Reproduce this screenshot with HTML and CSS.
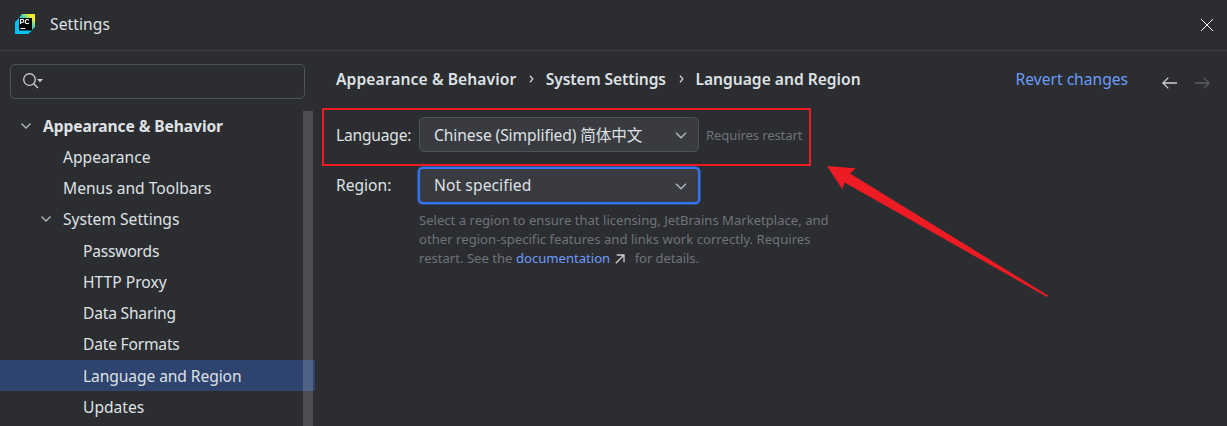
FILE: index.html
```html
<!DOCTYPE html>
<html lang="en">
<head>
<meta charset="utf-8">
<title>Settings</title>
<link rel="stylesheet" href="styles.css">
</head>
<body>
<div class="window">
  <header class="titlebar">
    <svg class="logo" width="20" height="20" viewBox="0 0 20 20">
      <defs>
        <linearGradient id="g" x1="6" y1="14" x2="18" y2="2" gradientUnits="userSpaceOnUse">
          <stop offset="0.3" stop-color="#12c8e8"/><stop offset="0.62" stop-color="#5fd9a0"/><stop offset="0.9" stop-color="#f4ee2a"/>
        </linearGradient>
      </defs>
      <path fill="url(#g)" d="M7 0H20V13L13 20H4V4z"/>
      <path fill="#07c3f2" d="M4 4L0 8V20H13L17 16H4z"/>
      <path fill="#000" d="M4 4H17V16.500H4z"/>
      <g class="mark">
        <path d="M5.6 10V5.5H7.4Q8.8 5.5 8.8 6.900T7.4 8.300H5.6M14 6.400Q13.3 5.500 12.2 5.500Q10.3 5.500 10.3 7.600T12.2 9.700Q13.3 9.700 14 8.900M5.500 14.500H10.200"/>
      </g>
    </svg>
    <span class="title">Settings</span>
    <svg class="close" width="12" height="12" viewBox="0 0 12 12"><path d="M0 0L12 12M12 0L0 12"/></svg>
  </header>
  <div class="body">
    <aside class="sidebar">
      <div class="search">
        <svg width="22" height="17" viewBox="0 0 22 17"><circle cx="6.500" cy="6.500" r="5.800"/><path d="M10.700 10.700L15 15"/><path class="solid" d="M14 6H20L17 9.200z"/></svg>
      </div>
      <div class="tree">
        <div class="row top"><svg class="chev" width="10" height="6" viewBox="0 0 10 6"><path d="M.5 .5L5 5L9.5 .5"/></svg><span class="tight1">Appearance &amp; Behavior</span></div>
        <div class="row l2"><span>Appearance</span></div>
        <div class="row l2"><span>Menus and Toolbars</span></div>
        <div class="row sub"><svg class="chev" width="10" height="6" viewBox="0 0 10 6"><path d="M.5 .5L5 5L9.5 .5"/></svg><span>System Settings</span></div>
        <div class="row l3"><span class="tight2">Passwords</span></div>
        <div class="row l3"><span>HTTP Proxy</span></div>
        <div class="row l3"><span class="tight2">Data Sharing</span></div>
        <div class="row l3"><span class="tight2">Date Formats</span></div>
        <div class="row l3 selected"><span class="tight1">Language and Region</span></div>
        <div class="row l3"><span>Updates</span></div>
        <div class="scrollbar"></div>
      </div>
    </aside>
    <main class="content">
      <div class="crumbs">
        <span class="loose">Appearance &amp; Behavior</span>
        <svg class="sep" width="5" height="8" viewBox="0 0 5 8"><path d="M1 .8L3.8 4L1 7.2"/></svg>
        <span class="tight1">System Settings</span>
        <svg class="sep" width="5" height="8" viewBox="0 0 5 8"><path d="M1 .8L3.8 4L1 7.2"/></svg>
        <span>Language and Region</span>
        <span class="revert">Revert changes</span>
        <svg class="arrow" width="15" height="12" viewBox="0 0 15 12"><path d="M15 6H1M6.3 .6L.9 6L6.3 11.4"/></svg>
        <svg class="arrow off" width="15" height="12" viewBox="0 0 15 12"><path d="M0 6H14M8.7 .6L14.1 6L8.7 11.4"/></svg>
      </div>
      <div class="field">
        <span class="label tight2">Language:</span>
        <div class="select"><span class="tight1">Chinese (Simplified) 简体中文</span><svg class="chev" width="12" height="7" viewBox="0 0 12 7"><path d="M1 .8L6 5.8L11 .8"/></svg></div>
        <span class="hint">Requires restart</span>
      </div>
      <div class="field second">
        <span class="label">Region:</span>
        <div class="select focus"><span class="loose">Not specified</span><svg class="chev" width="12" height="7" viewBox="0 0 12 7"><path d="M1 .8L6 5.8L11 .8"/></svg></div>
      </div>
      <div class="help">
        <div>Select a region to ensure that licensing, JetBrains Marketplace, and</div>
        <div class="loose-help">other region-specific features and links work correctly. Requires</div>
        <div class="last"><span>restart. See the <a>documentation</a></span><svg width="10" height="10" viewBox="0 0 10 10"><path d="M.8 9.2L9 1M1.8 1H9V8.2"/></svg><span class="tight1">for details.</span></div>
      </div>
    </main>
  </div>
  <div class="highlight"></div>
  <svg class="pointer" width="225" height="135" viewBox="825 164 225 135"><path d="M827 166L855.5 168.300L850 173.500L1048 295.500L1047 297L844.500 182.500L842.500 189.500z"/></svg>
</div>
</body>
</html>
```
FILE: styles.css
```css
* { box-sizing: border-box; }
body { margin: 0; background: #2b2d30; }
.window {
  position: relative; width: 1227px; height: 426px; overflow: hidden;
  display: flex; flex-direction: column;
  color: #dfe1e5; font: 15.6px/20px "Noto Sans", "Noto Sans CJK SC", sans-serif; white-space: nowrap;
}
.window svg { flex: none; fill: none; stroke: #ced0d6; stroke-width: 1.3; }
.loose { letter-spacing: .1px; }
.loose-help { letter-spacing: .02px; }
.tight1 { letter-spacing: -.09px; }
.tight2 { letter-spacing: -.2px; }
.titlebar { height: 51px; flex: none; display: flex; align-items: center; padding: 0 14px 2px 15px; border-bottom: 1px solid #3c3e42; }
.window .logo { stroke: none; }
.mark { fill: none; stroke: #fff; stroke-width: 1.1; }
.title { margin-left: 15px; letter-spacing: .08px; }
.window .close { margin-left: auto; margin-top: 2px; stroke: #fff; stroke-width: 1; }
.body { display: flex; flex: 1; min-height: 0; }
.sidebar { width: 315px; flex: none; padding-top: 13px; }
.search { width: 295px; height: 35px; margin-left: 10px; border: 1px solid #4e5157; border-radius: 5px; padding: 8px 12px; }
.search svg { display: block; }
.window .solid { fill: #ced0d6; stroke: none; }
.tree { position: relative; margin-top: 11px; height: 316px; }
.row { height: 31.25px; display: flex; align-items: center; }
.top { padding-left: 21px; font-weight: 700; gap: 12px; }
.sub { padding-left: 41px; gap: 12px; }
.l2 { padding-left: 63px; }
.l3 { padding-left: 83px; }
.selected { background: #2e436e; }
.scrollbar { position: absolute; right: 2px; top: 1px; width: 10px; height: 320px; background: rgba(255,255,255,.16); }
.window .chev { stroke: #b4b8bf; }
.content { flex: 1; padding: 17px 17px 0 21px; }
.crumbs { display: flex; align-items: center; height: 21px; font-weight: 600; }
.sep { margin: 1px 11.500px 0 13px; }
.revert { font-weight: 400; color: #6b9bfa; margin-left: auto; margin-right: 34px; }
.arrow { margin-top: 8px; }
.off { opacity: .3; margin-left: 18px; }
.field { display: flex; align-items: center; height: 35px; margin-top: 28px; }
.label { width: 83px; }
.second { margin-top: 15px; }
.select { width: 280px; height: 35px; border: 1px solid #4e5157; border-radius: 5px; background: #393b40; display: flex; align-items: center; justify-content: space-between; padding: 0 11px 0 14px; }
.select .chev { margin-top: 2px; }
.focus { width: 282px; height: 37px; border: 2px solid #3574f0; margin: 1px -1px 0; padding: 0 11px 0 14px; box-shadow: 0 0 0 .5px #3574f0; }
.hint { color: #6f737a; font-size: 13px; letter-spacing: -.08px; margin-left: 7px; }
.help { margin: 9px 0 0 83px; color: #6f737a; font-size: 13.1px; line-height: 19px; }
.help a { color: #6b9bfa; }
.last { display: flex; align-items: center; }
.last svg { margin: 0 9.500px 0 5px; }
.highlight { position: absolute; left: 322px; top: 108px; width: 489px; height: 58px; border: 2px solid #ed1c24; }
.window .pointer { position: absolute; left: 825px; top: 164px; fill: #ed1c24; stroke: none; }
```
